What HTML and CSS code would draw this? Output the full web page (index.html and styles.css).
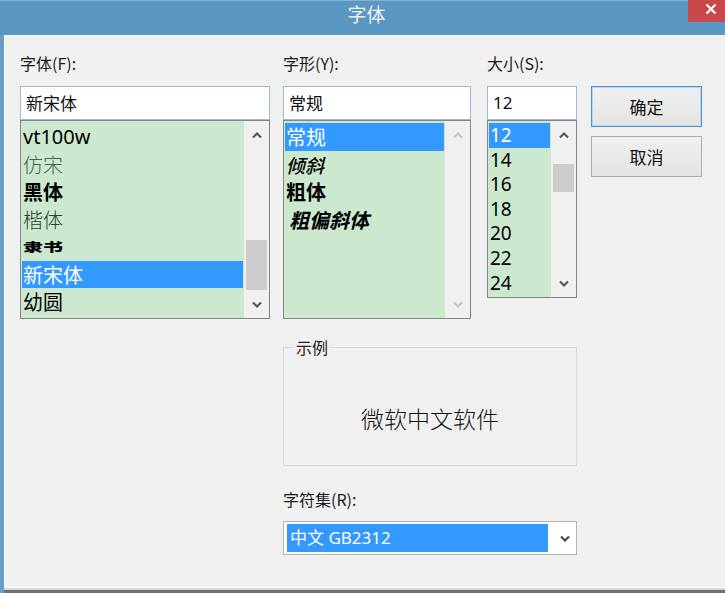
FILE: index.html
```html
<!DOCTYPE html>
<html lang="zh-CN">
<head>
<meta charset="utf-8">
<title>字体</title>
<link rel="stylesheet" href="styles.css">
</head>
<body>
<div class="window">
  <header class="titlebar">
    <h1 class="title">字体</h1>
    <button class="close" aria-label="关闭">
      <svg width="12" height="12" viewBox="0 0 12 12"><path d="M1.5 1.5 L10.5 10.5 M10.5 1.5 L1.5 10.5" fill="none" stroke="#ffffff" stroke-width="2.2"/></svg>
    </button>
  </header>
  <div class="frame">
    <main class="content">
      <div class="label col-font">字体(F):</div>
      <div class="label col-style">字形(Y):</div>
      <div class="label col-size">大小(S):</div>

      <div class="field col-font">新宋体</div>
      <div class="field col-style">常规</div>
      <div class="field field-num col-size">12</div>

      <div class="buttons">
        <button class="btn btn-default">确定</button>
        <button class="btn">取消</button>
      </div>

      <div class="list col-font">
        <ul class="items">
          <li class="latin">vt100w</li>
          <li class="f-fangsong">仿宋</li>
          <li class="f-hei">黑体</li>
          <li class="f-kai">楷体</li>
          <li class="f-li"><span class="li-glyph">隶书</span></li>
          <li class="selected">新宋体</li>
          <li>幼圆</li>
        </ul>
        <div class="scrollbar">
          <div class="sb-btn"><svg class="chev" width="10" height="7" viewBox="0 0 10 7"><path d="M1 5.5 L5 1.5 L9 5.5" fill="none" stroke="currentColor" stroke-width="2.1"/></svg></div>
          <div class="sb-track"><div class="sb-thumb thumb-font"></div></div>
          <div class="sb-btn"><svg class="chev" width="10" height="7" viewBox="0 0 10 7"><path d="M1 1.5 L5 5.5 L9 1.5" fill="none" stroke="currentColor" stroke-width="2.1"/></svg></div>
        </div>
      </div>

      <div class="list col-style">
        <ul class="items">
          <li class="selected">常规</li>
          <li class="s-italic">倾斜</li>
          <li class="s-bold">粗体</li>
          <li class="s-bolditalic">粗偏斜体</li>
        </ul>
        <div class="scrollbar sb-disabled">
          <div class="sb-btn"><svg class="chev" width="10" height="7" viewBox="0 0 10 7"><path d="M1 5.5 L5 1.5 L9 5.5" fill="none" stroke="currentColor" stroke-width="2.1"/></svg></div>
          <div class="sb-track"></div>
          <div class="sb-btn"><svg class="chev" width="10" height="7" viewBox="0 0 10 7"><path d="M1 1.5 L5 5.5 L9 1.5" fill="none" stroke="currentColor" stroke-width="2.1"/></svg></div>
        </div>
      </div>

      <div class="list list-size col-size">
        <ul class="items size-items">
          <li class="selected">12</li>
          <li>14</li>
          <li>16</li>
          <li>18</li>
          <li>20</li>
          <li>22</li>
          <li>24</li>
        </ul>
        <div class="scrollbar">
          <div class="sb-btn"><svg class="chev" width="10" height="7" viewBox="0 0 10 7"><path d="M1 5.5 L5 1.5 L9 5.5" fill="none" stroke="currentColor" stroke-width="2.1"/></svg></div>
          <div class="sb-track"><div class="sb-thumb thumb-size"></div></div>
          <div class="sb-btn"><svg class="chev" width="10" height="7" viewBox="0 0 10 7"><path d="M1 1.5 L5 5.5 L9 1.5" fill="none" stroke="currentColor" stroke-width="2.1"/></svg></div>
        </div>
      </div>

      <fieldset class="sample">
        <legend class="sample-legend">示例</legend>
        <div class="sample-text">微软中文软件</div>
      </fieldset>

      <div class="label charset-label">字符集(R):</div>
      <div class="select">
        <div class="select-value">中文 GB2312</div>
        <div class="select-arrow"><svg class="chev" width="10" height="7" viewBox="0 0 10 7"><path d="M1 1.5 L5 5.5 L9 1.5" fill="none" stroke="currentColor" stroke-width="2.1"/></svg></div>
      </div>
    </main>
    <div class="frame-bottom"></div>
  </div>
</div>
</body>
</html>
```

FILE: styles.css
```css
* {
  box-sizing: border-box;
}

html, body {
  margin: 0;
  padding: 0;
}

body {
  background: #f0f0f0;
  font-family: "Noto Sans CJK SC", "Noto Sans", sans-serif;
  color: #1a1a1a;
}

.window {
  width: 725px;
  height: 593px;
  display: flex;
  flex-direction: column;
  overflow: hidden;
}

/* title bar */
.titlebar {
  flex: none;
  height: 35px;
  background: #5b98c1;
  border-top: 1px solid #86b1d0;
  display: grid;
  grid-template-columns: 1fr auto 1fr;
  align-items: start;
}

.title {
  grid-column: 2;
  margin: 0;
  padding: 1px 0 0 8px;
  font-size: 19px;
  font-weight: 400;
  line-height: 24px;
  color: #eef2f6;
}

.close {
  grid-column: 3;
  justify-self: end;
  width: 37px;
  height: 22px;
  margin: -1px 0 0;
  padding: 3px 0 0 17px;
  border: 0;
  background: #c8484b;
  display: flex;
  align-items: flex-start;
  justify-content: flex-start;
}

/* frame */
.frame {
  flex: 1;
  display: flex;
  flex-direction: column;
  border-left: 4px solid #6b9ec4;
}

.content {
  flex: 1;
  display: grid;
  grid-template-columns: 250px 13px 188px 16px 90px 14px 111px;
  align-content: start;
  padding: 17px 0 0 16px;
  border-top: 1px solid #fbfbfb;
  box-shadow: inset 1px 0 0 #fbfbfb;
}

.frame-bottom {
  flex: none;
  height: 6px;
  background: linear-gradient(#ffffff 0 1px, #d7d7d7 1px 3px, #6d6f71 3px);
}

.col-font { grid-column: 1; }
.col-style { grid-column: 3; }
.col-size { grid-column: 5; }

/* labels */
.label {
  grid-row: 1;
  font-size: 16px;
  line-height: 20px;
  margin-bottom: 13px;
  color: #1b1b1b;
  white-space: nowrap;
}

/* edit fields */
.field {
  grid-row: 2;
  height: 34px;
  border: 1px solid #a2b8d1;
  background: #ffffff;
  font-size: 17px;
  line-height: 32px;
  padding-left: 5px;
  color: #111111;
}

.field-num {
  font-family: "Noto Sans", sans-serif;
}

/* list boxes */
.list {
  grid-row: 3;
  height: 199px;
  display: flex;
  border: 1px solid #858585;
  background: #cce8cf;
}

.list-size {
  height: 178px;
  align-self: start;
}

.items {
  flex: 1;
  margin: 0;
  padding: 2px 1px 0;
  list-style: none;
  font-size: 20px;
  overflow: hidden;
  color: #000000;
}

.items li {
  height: 27.5px;
  line-height: 27.5px;
  padding-left: 1px;
  white-space: nowrap;
}

.items li.selected {
  background: #3399ff;
  color: #ffffff;
}

.latin {
  font-family: "Noto Sans", sans-serif;
}

.f-fangsong {
  font-weight: 300;
  color: #4f5d50;
}

.f-hei {
  font-weight: 700;
}

.f-kai {
  font-weight: 300;
  color: #333d34;
}

.li-glyph {
  display: inline-block;
  font-weight: 900;
  transform: scale(1, 0.62);
}

.s-italic {
  font-style: italic;
  font-size: 19px;
  font-weight: 500;
}

.s-bold {
  font-weight: 700;
}

.s-bolditalic {
  font-weight: 700;
  font-style: italic;
  padding-left: 4px !important;
}

.size-items li {
  height: 24.6px;
  line-height: 24.6px;
  font-family: "Noto Sans", sans-serif;
  font-size: 19px;
}

/* scrollbars */
.scrollbar {
  flex: none;
  width: 25px;
  background: #f0f0f0;
  display: flex;
  flex-direction: column;
  color: #555555;
}

.sb-disabled {
  color: #c3c3c3;
}

.sb-btn {
  flex: none;
  height: 28px;
  display: flex;
  align-items: center;
  justify-content: center;
}

.chev {
  display: block;
}

.sb-track {
  flex: 1;
  display: flex;
  flex-direction: column;
  padding: 0 2px;
}

.sb-thumb {
  background: #cdcdcd;
}

.thumb-font {
  margin-top: 91px;
  height: 50px;
}

.thumb-size {
  margin-top: 15px;
  height: 28px;
}

/* buttons */
.buttons {
  grid-column: 7;
  grid-row: 2 / 4;
  align-self: start;
  display: flex;
  flex-direction: column;
  gap: 9px;
}

.btn {
  width: 111px;
  height: 41px;
  margin: 0;
  padding: 0;
  border: 1px solid #adadad;
  background: linear-gradient(#f0f0f0, #e4e4e4);
  font-family: "Noto Sans CJK SC", sans-serif;
  font-size: 17px;
  color: #111111;
}

.btn-default {
  border-color: #4d92d4;
  box-shadow: inset 0 0 0 1px #b9d6f1;
}

/* sample group */
.sample {
  grid-column: 3 / 6;
  grid-row: 4;
  margin: 18px 0 0;
  padding: 0;
  min-width: 0;
  border: 1px solid #d6d6d6;
}

.sample-legend {
  margin-left: 10px;
  padding: 0 2px;
  font-size: 16px;
  line-height: 20px;
  color: #222222;
}

.sample-text {
  height: 108px;
  padding-top: 13px;
  display: flex;
  align-items: center;
  justify-content: center;
  font-size: 23px;
  font-weight: 300;
  color: #141414;
}

/* charset */
.charset-label {
  grid-column: 3 / 6;
  grid-row: 5;
  margin: 23px 0 0;
}

.select {
  grid-column: 3 / 6;
  grid-row: 6;
  margin-top: 12px;
  height: 34px;
  display: flex;
  padding: 2px 0 2px 3px;
  border: 1px solid #b4b4b4;
  background: #ffffff;
}

.select-value {
  flex: none;
  width: 261px;
  background: #3399ff;
  color: #ffffff;
  font-family: "Noto Sans", "Noto Sans CJK SC", sans-serif;
  font-size: 17px;
  line-height: 28px;
  padding-left: 3px;
  white-space: nowrap;
}

.select-arrow {
  flex: 1;
  display: flex;
  align-items: center;
  justify-content: center;
  padding-left: 5px;
  color: #444444;
}
```
